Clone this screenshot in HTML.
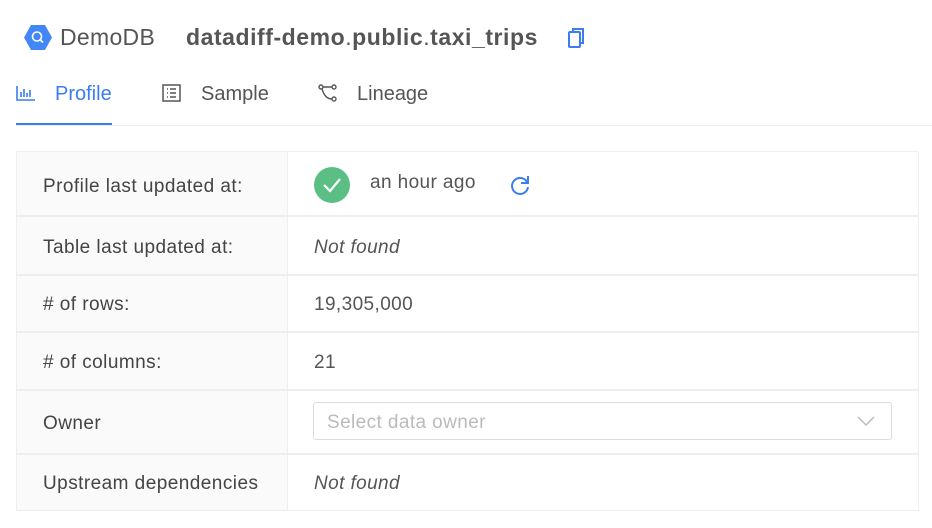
<!DOCTYPE html>
<html><head><meta charset="utf-8"><style>
*{margin:0;padding:0;box-sizing:border-box}
body{width:932px;height:528px;background:#fff;font-family:"Liberation Sans",sans-serif;color:#555;position:relative;overflow:hidden}
.a{position:absolute;white-space:nowrap}
.tbl{position:absolute;left:16px;top:151px;width:903px;height:360px;border:1px solid #eee;background:#fff}
.lab{position:absolute;left:0;top:0;width:271px;height:100%;background:#fafafa;border-right:1px solid #eee}
.hl{position:absolute;left:0;width:100%;height:2px;background:#eee}
.lt{position:absolute;left:26px;font-size:19px;color:#444;letter-spacing:0.45px}
.vt{position:absolute;left:297px;font-size:19px;color:#555;letter-spacing:0.4px}
i{font-style:italic}
</style></head><body>
<svg class="a" style="left:23px;top:24px" width="30" height="27" viewBox="0 0 30 27"><polygon points="8,1 22,1 29,13.5 22,26 8,26 1,13.5" fill="#4386f5"/><circle cx="14" cy="12.5" r="4.5" fill="none" stroke="#fff" stroke-width="1.6"/><line x1="17" y1="15.5" x2="20" y2="18.5" stroke="#fff" stroke-width="1.8"/></svg>
<div class="a" style="left:60px;top:24px;font-size:23px;color:#555;letter-spacing:0.3px">DemoDB</div>
<div class="a" style="left:186px;top:24px;font-size:23px;font-weight:bold;color:#555;letter-spacing:0.55px">datadiff-demo<span style="font-weight:normal">.</span>public<span style="font-weight:normal">.</span>taxi_trips</div>
<svg class="a" style="left:566px;top:27px" width="20" height="22" viewBox="0 0 20 22"><rect x="3" y="5" width="11" height="15" fill="none" stroke="#3b7cf0" stroke-width="2" rx="1"/><path d="M7 5V2h10v14h-3" fill="none" stroke="#3b7cf0" stroke-width="2"/></svg>
<svg class="a" style="left:16px;top:85px" width="20" height="16" viewBox="0 0 20 16"><path d="M1 1v14h18M5 12V7M8 12V4M11 12V8M14 12V5" stroke="#3b7cf0" stroke-width="1.6" fill="none"/></svg>
<div class="a" style="left:55px;top:83px;font-size:20px;color:#3b7cf0">Profile</div>
<div class="a" style="left:16px;top:123px;width:96px;height:3px;background:#3b7cf0"></div>
<div class="a" style="left:16px;top:125px;width:916px;height:1px;background:#eee"></div>
<svg class="a" style="left:162px;top:84px" width="20" height="18" viewBox="0 0 20 18"><rect x="1" y="1" width="17" height="16" fill="none" stroke="#555" stroke-width="1.5"/><path d="M5 5h1M5 9h1M5 13h1M8 5h6M8 9h6M8 13h6" stroke="#555" stroke-width="1.4"/></svg>
<div class="a" style="left:201px;top:83px;font-size:20px;color:#555">Sample</div>
<svg class="a" style="left:318px;top:84px" width="20" height="18" viewBox="0 0 20 18"><circle cx="3" cy="3" r="2" fill="none" stroke="#555" stroke-width="1.4"/><circle cx="16" cy="3" r="2" fill="none" stroke="#555" stroke-width="1.4"/><circle cx="16" cy="15" r="2" fill="none" stroke="#555" stroke-width="1.4"/><path d="M5 3h9M4 5q3 10 10 10" fill="none" stroke="#555" stroke-width="1.4"/></svg>
<div class="a" style="left:357px;top:83px;font-size:20px;color:#555">Lineage</div>
<div class="tbl">
<div class="lab"></div>
<div class="hl" style="top:63px"></div>
<div class="hl" style="top:122px"></div>
<div class="hl" style="top:179px"></div>
<div class="hl" style="top:237px"></div>
<div class="hl" style="top:301px"></div>
<div class="lt" style="top:24px">Profile last updated at:</div>
<div class="lt" style="top:85px">Table last updated at:</div>
<div class="lt" style="top:142px"># of rows:</div>
<div class="lt" style="top:200px"># of columns:</div>
<div class="lt" style="top:261px">Owner</div>
<div class="lt" style="top:321px">Upstream dependencies</div>
<svg class="a" style="left:296px;top:14px" width="38" height="38" viewBox="0 0 38 38"><circle cx="19" cy="19" r="18" fill="#5bbf85"/><path d="M11 19l6 6 10-12" fill="none" stroke="#fff" stroke-width="2.2"/></svg>
<div class="vt" style="left:353px;top:20px">an hour ago</div>
<svg class="a" style="left:492px;top:22px" width="22" height="22" viewBox="0 0 22 22"><path d="M18 8A8 8 0 1 0 19 13" fill="none" stroke="#3b7cf0" stroke-width="2"/><path d="M19 2v7h-7" fill="none" stroke="#3b7cf0" stroke-width="2"/></svg>
<div class="vt" style="top:85px"><i>Not found</i></div>
<div class="vt" style="top:142px">19,305,000</div>
<div class="vt" style="top:200px">21</div>
<div class="a" style="left:296px;top:250px;width:579px;height:38px;border:1px solid #ddd;border-radius:3px;background:#fff"></div>
<div class="vt" style="left:310px;top:260px;color:#bbb">Select data owner</div>
<svg class="a" style="left:840px;top:263px" width="18" height="12" viewBox="0 0 18 12"><path d="M1 2l8 8 8-8" fill="none" stroke="#bbb" stroke-width="1.5"/></svg>
<div class="vt" style="top:321px"><i>Not found</i></div>
</div>
</body></html>
